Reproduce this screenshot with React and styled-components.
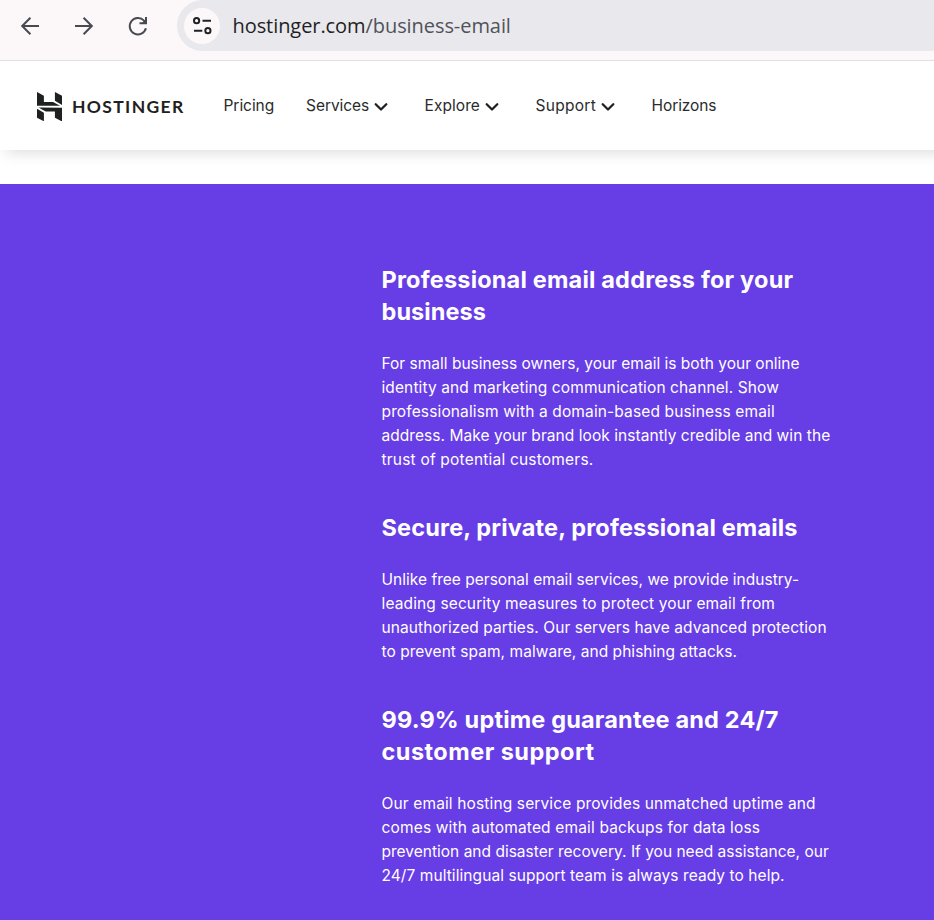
import React from "react";
import styled, { createGlobalStyle } from "styled-components";

const GlobalStyle = createGlobalStyle`
  * { box-sizing: border-box; }
  body { margin: 0; background: #fff; overflow: hidden; }
`;

const Page = styled.div`
  display: flex;
  flex-direction: column;
  width: 934px;
  height: 920px;
  font-family: Inter, "DM Sans", sans-serif;
  overflow: hidden;
`;

const BrowserBar = styled.div`
  display: flex;
  flex: none;
  height: 61px;
  padding-left: 18px;
  background: #fcf8f9;
  border-bottom: 1px solid #e2dfe1;
`;

const BrowserButtons = styled.div`
  display: flex;
  gap: 30px;
  height: 52px;
  align-items: center;
  width: 159px;
  flex: none;
`;

const BrowserIcon = styled.svg`
  width: 24px;
  height: 24px;
  flex: none;
  fill: none;
  stroke: #474a50;
  stroke-width: 2;
`;

const AddressBar = styled.div`
  display: flex;
  flex: 1;
  align-items: center;
  height: 51px;
  padding-left: 7px;
  background: #e9e8ed;
  border-radius: 26px 0 0 26px;
`;

const SiteInfo = styled.span`
  display: flex;
  align-items: center;
  justify-content: center;
  width: 36px;
  height: 36px;
  margin-right: 12.5px;
  border-radius: 50%;
  background: #fcf8f9;
`;

const TuneIcon = styled.svg`
  width: 24px;
  height: 24px;
  fill: none;
  stroke: #202124;
  stroke-width: 2;
`;

const Url = styled.span`
  font: 400 20px/28px "Open Sans", "Segoe UI", sans-serif;
  letter-spacing: -0.07px;
  color: #1f1f23;
  white-space: nowrap;
`;

const UrlPath = styled.span`
  color: #50535a;
`;

const Header = styled.header`
  display: flex;
  flex: none;
  align-items: center;
  height: 89px;
  margin-right: -24px;
  padding: 1px 0 0 37px;
  background: #fff;
  box-shadow: 0 8px 14px -6px rgba(0, 0, 0, 0.15);
`;

const Brand = styled.a`
  display: flex;
  align-items: center;
  gap: 10px;
  width: 186.5px;
  flex: none;
  color: #1f2020;
`;

const BrandMark = styled.svg`
  width: 25px;
  height: 29.5px;
  margin-top: 1px;
  fill: currentColor;
`;

const BrandName = styled.span`
  padding-top: 1px;
  font: 700 17.5px/24px Lato, sans-serif;
  letter-spacing: 1.35px;
`;

const Nav = styled.nav`
  display: flex;
  align-items: center;
`;

const NavItem = styled.a`
  display: flex;
  align-items: center;
  width: ${(p) => p.$width}px;
  font-size: 15.5px;
  line-height: 24px;
  letter-spacing: ${(p) => p.$tracking}px;
  color: #2a2b2b;
  white-space: nowrap;
`;

const Chevron = styled.svg`
  width: 14px;
  height: 10px;
  margin: 2px 0 0 5px;
  fill: none;
  stroke: #1f2020;
  stroke-width: 2.3;
  stroke-linecap: round;
  stroke-linejoin: round;
`;

const Features = styled.main`
  display: flex;
  flex: 1;
  flex-direction: column;
  gap: 40px;
  margin-top: 34px;
  padding: 80px 0 0 381.5px;
  background: #673de6;
  color: #fff;
`;

const Feature = styled.section`
  display: flex;
  flex-direction: column;
  gap: 24px;
`;

const Heading = styled.h2`
  margin: 0;
  font-size: 23.5px;
  line-height: 32px;
  font-weight: 700;
`;

const Copy = styled.p`
  margin: 0;
  font-size: 15.5px;
  line-height: 24px;
`;

const Line = styled.span`
  display: block;
  white-space: nowrap;
  letter-spacing: ${(p) => p.$tracking}px;
`;

const navItems = [
  { label: "Pricing", width: 82.5, tracking: -0.05 },
  { label: "Services", width: 118.5, tracking: -0.05, menu: true },
  { label: "Explore", width: 111, tracking: 0.08, menu: true },
  { label: "Support", width: 116, tracking: 0.28, menu: true },
  { label: "Horizons", width: 80, tracking: -0.08 },
];

const features = [
  {
    title: [
      ["Professional email address for your", 0.19],
      ["business", 0.08],
    ],
    copy: [
      ["For small business owners, your email is both your online", 0.005],
      ["identity and marketing communication channel. Show", 0.11],
      ["professionalism with a domain-based business email", 0.135],
      ["address. Make your brand look instantly credible and win the", 0.055],
      ["trust of potential customers.", 0.2],
    ],
  },
  {
    title: [["Secure, private, professional emails", 0.16]],
    copy: [
      ["Unlike free personal email services, we provide industry-", 0.02],
      ["leading security measures to protect your email from", 0.125],
      ["unauthorized parties. Our servers have advanced protection", 0.075],
      ["to prevent spam, malware, and phishing attacks.", 0.04],
    ],
  },
  {
    title: [
      ["99.9% uptime guarantee and 24/7", 0.17],
      ["customer support", 0.47],
    ],
    copy: [
      ["Our email hosting service provides unmatched uptime and", 0.135],
      ["comes with automated email backups for data loss", 0.155],
      ["prevention and disaster recovery. If you need assistance, our", 0.01],
      ["24/7 multilingual support team is always ready to help.", 0.07],
    ],
  },
];

const Lines = ({ items }) =>
  items.map(([text, tracking]) => (
    <Line key={text} $tracking={tracking}>
      {text}{" "}
    </Line>
  ));

export default function App() {
  return (
    <Page>
      <GlobalStyle />
      <BrowserBar>
        <BrowserButtons>
          <BrowserIcon viewBox="0 0 24 24" aria-label="Back">
            <path d="M21 12H5M12.4 3.8 4.2 12l8.2 8.2" />
          </BrowserIcon>
          <BrowserIcon viewBox="0 0 24 24" aria-label="Forward">
            <path d="M3 12h16M11.6 3.8 19.8 12l-8.2 8.2" />
          </BrowserIcon>
          <BrowserIcon viewBox="0 0 24 24" aria-label="Reload">
            <path d="M19.9 14.2A8.2 8.2 0 1 1 18 6.6L20 8.8" />
            <path d="M20 3v6.2h-6.5" />
            <path d="M20 5.5V9.200h-3.700z" fill="#474a50" strokeWidth="1" />
          </BrowserIcon>
        </BrowserButtons>
        <AddressBar>
          <SiteInfo>
            <TuneIcon viewBox="0 0 24 24">
              <circle cx="6.6" cy="6.7" r="2.6" />
              <path d="M12.5 6.700H21M4 16.700H12.3" />
              <circle cx="17.9" cy="16.7" r="2.6" />
            </TuneIcon>
          </SiteInfo>
          <Url>
            hostinger.com<UrlPath>/business-email</UrlPath>
          </Url>
        </AddressBar>
      </BrowserBar>
      <Header>
        <Brand>
          <BrandMark viewBox="1.8 0 20.4 24">
            <path d="M16.415 0v7.16l5.785 3.384V2.949L16.415 0ZM1.8 0v11.237h18.815L14.89 8.09l-7.457-.003V3.024L1.8 0Zm14.615 20.894v-5.019l-7.514-.005c.007.033-5.82-3.197-5.82-3.197l19.119.091V24l-5.785-3.106ZM1.8 13.551v7.343l5.633 2.949v-6.988L1.8 13.551Z" />
          </BrandMark>
          <BrandName>HOSTINGER</BrandName>
        </Brand>
        <Nav>
          {navItems.map(({ label, width, tracking, menu }) => (
            <NavItem key={label} $width={width} $tracking={tracking}>
              {label}
              {menu && (
                <Chevron viewBox="0 0 14 10">
                  <path d="M1.7 2.2 7 7.500l5.3-5.3" />
                </Chevron>
              )}
            </NavItem>
          ))}
        </Nav>
      </Header>
      <Features>
        {features.map(({ title, copy }) => (
          <Feature key={title[0][0]}>
            <Heading>
              <Lines items={title} />
            </Heading>
            <Copy>
              <Lines items={copy} />
            </Copy>
          </Feature>
        ))}
      </Features>
    </Page>
  );
}
